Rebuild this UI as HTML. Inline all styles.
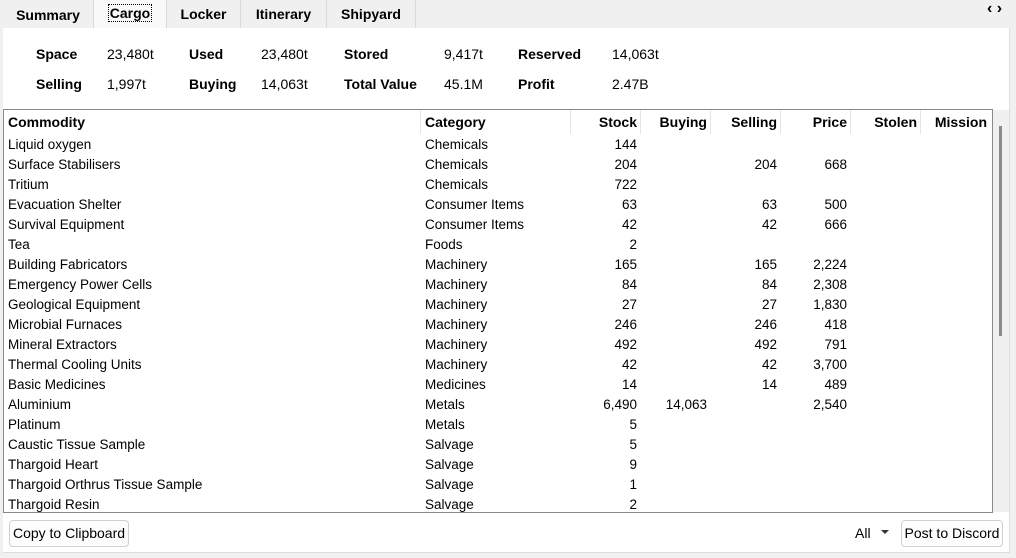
<!DOCTYPE html>
<html><head><meta charset="utf-8"><style>
*{margin:0;padding:0;box-sizing:border-box}
body{width:1016px;height:558px;background:#f0f0f0;font-family:"Liberation Sans",sans-serif;position:relative;overflow:hidden;color:#000}
.a{position:absolute;white-space:nowrap}
.tab{position:absolute;top:0;height:28px;border-right:1px solid #d9d9d9;font-weight:bold;font-size:14px;text-align:center;line-height:29px;background:#f0f0f0}
.panel{position:absolute;left:3px;top:28px;width:1007px;height:525px;background:#fff;border-right:1px solid #dcdcdc;border-bottom:1px solid #dcdcdc}
.lb{font-weight:bold;font-size:14px}
.v{font-size:14px}
.tbl{position:absolute;left:3px;top:109px;width:990px;height:404px;border:1px solid #8a8a8a;background:#fff;overflow:hidden}
.h{position:absolute;top:0;height:24px;font-weight:bold;font-size:14px;line-height:25px;border-right:1px solid #e5e5e5}
.r{position:absolute;font-size:13.5px;line-height:20px;white-space:nowrap}
.btn{position:absolute;border:1px solid #d0d0d0;border-radius:4px;background:#fdfdfd;font-size:14px;text-align:center;line-height:25px}
</style></head><body>
<div class="tab" style="left:3px;width:91px;line-height:30px">Summary</div>
<div class="tab" style="left:94px;width:73px;background:#f9f9f9;line-height:26px"><span style="outline:1px dotted #000;padding:0 1px">Cargo</span></div>
<div class="tab" style="left:167px;width:74px">Locker</div>
<div class="tab" style="left:241px;width:86px">Itinerary</div>
<div class="tab" style="left:327px;width:89px">Shipyard</div>
<div class="a" style="left:987px;top:0;font-size:16px;font-weight:bold">‹ ›</div>
<div class="panel"></div>
<div style="position:absolute;left:993px;top:110px;width:16px;height:402px;background:#f0f0f0"></div>
<div style="position:absolute;left:999px;top:126px;width:3px;height:210px;background:#8a8a8a"></div>
<div class="a lb" style="left:36px;top:46px">Space</div><div class="a v" style="left:107px;top:46px">23,480t</div>
<div class="a lb" style="left:189px;top:46px">Used</div><div class="a v" style="left:261px;top:46px">23,480t</div>
<div class="a lb" style="left:344px;top:46px">Stored</div><div class="a v" style="left:444px;top:46px">9,417t</div>
<div class="a lb" style="left:518px;top:46px">Reserved</div><div class="a v" style="left:612px;top:46px">14,063t</div>
<div class="a lb" style="left:36px;top:76px">Selling</div><div class="a v" style="left:107px;top:76px">1,997t</div>
<div class="a lb" style="left:189px;top:76px">Buying</div><div class="a v" style="left:261px;top:76px">14,063t</div>
<div class="a lb" style="left:344px;top:76px">Total Value</div><div class="a v" style="left:444px;top:76px">45.1M</div>
<div class="a lb" style="left:518px;top:76px">Profit</div><div class="a v" style="left:612px;top:76px">2.47B</div>
<div class="tbl">
<div class="h" style="left:0;width:417px;padding-left:4px">Commodity</div>
<div class="h" style="left:417px;width:150px;padding-left:4px">Category</div>
<div class="h" style="left:567px;width:70px;text-align:right;padding-right:3px">Stock</div>
<div class="h" style="left:637px;width:70px;text-align:right;padding-right:3px">Buying</div>
<div class="h" style="left:707px;width:70px;text-align:right;padding-right:3px">Selling</div>
<div class="h" style="left:777px;width:70px;text-align:right;padding-right:3px">Price</div>
<div class="h" style="left:847px;width:70px;text-align:right;padding-right:3px">Stolen</div>
<div class="h" style="left:917px;width:70px;text-align:right;padding-right:4px;border:0">Mission</div>
<div id="rows"></div>
</div>
<div class="btn" style="left:9px;top:520px;width:120px;height:27px">Copy to Clipboard</div>
<div class="a" style="left:855px;top:525px;font-size:14px">All</div>
<div class="a" style="left:881px;top:530px;width:0;height:0;border-left:4px solid transparent;border-right:4px solid transparent;border-top:4px solid #333"></div>
<div class="btn" style="left:901px;top:520px;width:102px;height:27px">Post to Discord</div>
<script>
var d=[["Liquid oxygen","Chemicals","144","","",""],["Surface Stabilisers","Chemicals","204","","204","668"],["Tritium","Chemicals","722","","",""],["Evacuation Shelter","Consumer Items","63","","63","500"],["Survival Equipment","Consumer Items","42","","42","666"],["Tea","Foods","2","","",""],["Building Fabricators","Machinery","165","","165","2,224"],["Emergency Power Cells","Machinery","84","","84","2,308"],["Geological Equipment","Machinery","27","","27","1,830"],["Microbial Furnaces","Machinery","246","","246","418"],["Mineral Extractors","Machinery","492","","492","791"],["Thermal Cooling Units","Machinery","42","","42","3,700"],["Basic Medicines","Medicines","14","","14","489"],["Aluminium","Metals","6,490","14,063","","2,540"],["Platinum","Metals","5","","",""],["Caustic Tissue Sample","Salvage","5","","",""],["Thargoid Heart","Salvage","9","","",""],["Thargoid Orthrus Tissue Sample","Salvage","1","","",""],["Thargoid Resin","Salvage","2","","",""]];
var h="";d.forEach(function(r,i){var t=25+i*20;
h+='<div class="r" style="left:4px;top:'+t+'px">'+r[0]+'</div><div class="r" style="left:421px;top:'+t+'px">'+r[1]+'</div>';
[[r[2],355],[r[3],285],[r[4],215],[r[5],145]].forEach(function(c){if(c[0])h+='<div class="r" style="right:'+c[1]+'px;top:'+t+'px">'+c[0]+'</div>';});});
document.getElementById("rows").innerHTML=h;
</script>
</body></html>
